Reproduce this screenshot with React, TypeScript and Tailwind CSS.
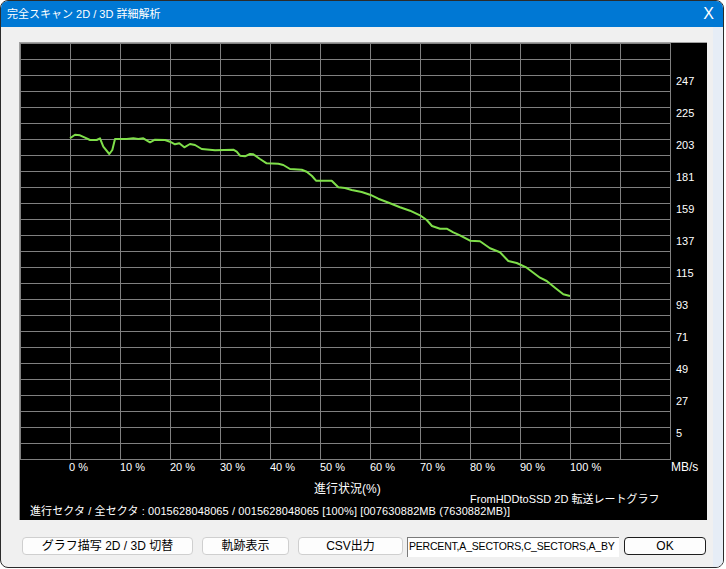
const font = '"Liberation Sans Narrow", "Liberation Sans", "Noto Sans CJK JP", sans-serif';

const pts: [number, number][] = [
  [70, 138.3], [75, 134.7], [80, 135.3], [85, 137.7], [90, 140], [96.7, 140], [100, 138.3],
  [103.3, 146.7], [109.3, 154], [112.3, 150], [115, 139], [126.7, 139], [133.3, 138.3],
  [138.3, 139], [143.3, 138.3], [150, 142.3], [155, 139.7], [165, 140], [170, 141.7],
  [175, 144.3], [179.3, 143.3], [184.3, 147.3], [190, 144], [195, 145], [201.7, 149],
  [215, 150.3], [233.3, 149.7], [236.7, 151.7], [240, 155.7], [245, 156.3], [250, 154],
  [253.3, 154.3], [260, 159], [266.7, 163.3], [278.3, 163.7], [283.3, 165], [290, 169],
  [301.7, 169.7], [306.7, 171.7], [312, 176], [316, 180.7], [331.7, 180.7], [338.3, 187.3],
  [345, 188], [351.7, 190], [361.7, 192], [370, 194.7], [378.3, 198.7], [390, 203.3],
  [400, 207.3], [410, 210.7], [420, 215.3], [426.7, 220], [432, 226], [440, 228.7],
  [446.7, 228.7], [453.3, 232.3], [460, 235.3], [470, 240.7], [480, 241.3], [490, 248.3],
  [500, 252.3], [508.3, 261], [516.7, 263], [526.7, 267.7], [540, 277.7], [546.7, 281],
  [555, 287.7], [563.3, 294.3], [570, 296],
];

const yLabels = [247, 225, 203, 181, 159, 137, 115, 93, 71, 49, 27, 5];
const xLabels = ['0 %', '10 %', '20 %', '30 %', '40 %', '50 %', '60 %', '70 %', '80 %', '90 %', '100 %'];

function Chart() {
  const vLines = Array.from({ length: 14 }, (_, i) => 20.5 + i * 50);
  const hLines = Array.from({ length: 27 }, (_, i) => 43.5 + i * 16);
  return (
    <svg width={687} height={433} viewBox="20 43 687 433" className="block">
      {vLines.map((x) => (
        <line key={'v' + x} x1={x} y1={43} x2={x} y2={460} stroke="#808080" strokeWidth={1} />
      ))}
      {hLines.map((y) => (
        <line key={'h' + y} x1={20} y1={y} x2={671} y2={y} stroke="#808080" strokeWidth={1} />
      ))}
      <polyline
        points={pts.map((p) => p.join(',')).join(' ')}
        fill="none"
        stroke="#7fdf4a"
        strokeWidth={2}
        strokeLinejoin="round"
      />
      {yLabels.map((v, i) => (
        <text key={v} x={676} y={81 + i * 32} fill="#fff" fontSize={11} fontFamily={font} dominantBaseline="central">
          {v}
        </text>
      ))}
      {xLabels.map((t, i) => (
        <text key={t} x={(i === 0 ? 69 : 70) + i * 50} y={467} fill="#fff" fontSize={11} fontFamily={font} dominantBaseline="central">
          {t}
        </text>
      ))}
      <text x={671} y={467} fill="#fff" fontSize={12} fontFamily={font} dominantBaseline="central">
        MB/s
      </text>
    </svg>
  );
}

export default function App() {
  return (
    <div className="w-[726px] h-[569px] bg-white" style={{ fontFamily: font }}>
      <div className="w-[724px] h-[568px] flex flex-col rounded-[8px] border border-[#2b2b2b] overflow-hidden bg-[#f0f0f0]">
        {/* title bar */}
        <div className="h-[26px] shrink-0 bg-[#0078d4] flex items-center justify-between pl-[6px] pr-[9px] text-white text-[11px]">
          <span>完全スキャン 2D / 3D 詳細解析</span>
          <span className="text-[16px] font-light leading-none">X</span>
        </div>

        <div className="flex-1 flex">
          <div className="w-[712px] pl-[18px] pt-[15px]">
            {/* graph panel */}
            <div className="w-[688px] h-[478px] bg-black border-t border-l border-[#a0a0a0] text-white text-[11px] leading-[14px]">
              <Chart />
              <div className="flex items-start mt-[6px]">
                <div className="w-[450px] pl-[294px] text-[12px]">進行状況(%)</div>
                <div className="mt-[10px]">FromHDDtoSSD 2D 転送レートグラフ</div>
              </div>
              <div className="pl-[10px] -mt-[2px] whitespace-nowrap tracking-[0.1px]">
                進行セクタ / 全セクタ : 0015628048065 / 0015628048065 [100%] [007630882MB (7630882MB)]
              </div>
            </div>

            {/* buttons */}
            <div className="flex items-start mt-[17px] ml-[3px] text-[12px] text-black">
              <button className="w-[171px] h-[18px] bg-[#fdfdfd] border border-[#cfcfcf] rounded-[4px] flex items-center justify-center">
                グラフ描写 2D / 3D 切替
              </button>
              <button className="ml-[9px] w-[87px] h-[18px] bg-[#fdfdfd] border border-[#cfcfcf] rounded-[4px] flex items-center justify-center">
                軌跡表示
              </button>
              <button className="ml-[9px] w-[105px] h-[18px] bg-[#fdfdfd] border border-[#cfcfcf] rounded-[4px] flex items-center justify-center">
                CSV出力
              </button>
              <div className="ml-[4px] w-[212px] h-[20px] bg-white border-t border-l border-[#7a7a7a] pl-[1px] overflow-hidden whitespace-nowrap text-[10.5px] tracking-[-0.2px] leading-[17px]">
                PERCENT,A_SECTORS,C_SECTORS,A_BY
              </div>
              <button className="ml-[5px] w-[82px] h-[18px] bg-[#fdfdfd] border border-[#1e1e1e] rounded-[4px] flex items-center justify-center">
                OK
              </button>
            </div>
          </div>
          <div className="w-[10px] bg-[#e6edf6]" />
        </div>
      </div>
    </div>
  );
}
